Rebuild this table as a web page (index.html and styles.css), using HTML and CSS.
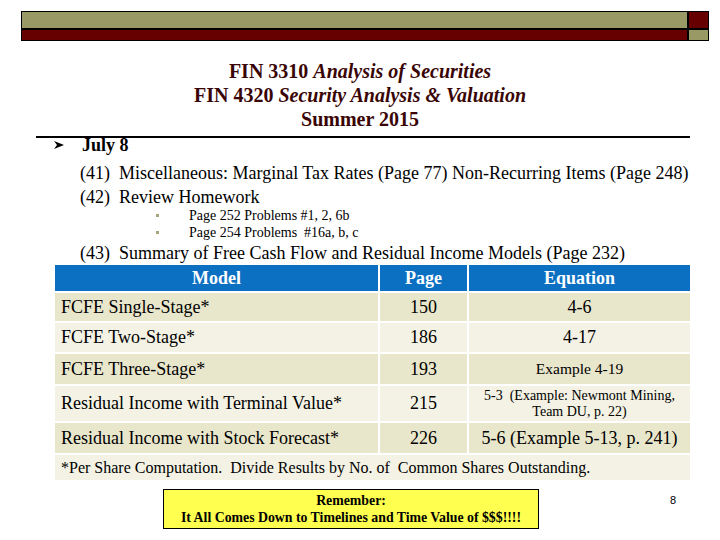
FILE: index.html
```html
<!DOCTYPE html>
<html>
<head>
<meta charset="utf-8">
<link rel="stylesheet" href="styles.css">
</head>
<body>
<div class="slide">
  <div class="topbar">
    <div class="olive"></div>
    <div class="red"></div>
    <div class="red"></div>
    <div class="olive"></div>
  </div>
  <div class="title">
    <div>FIN 3310 <i>Analysis of Securities</i></div>
    <div>FIN 4320 <i>Security Analysis &amp; Valuation</i></div>
    <div>Summer 2015</div>
  </div>
  <div class="rule"></div>
  <div class="lvl1">
    <svg class="arrow" width="10" height="10" viewBox="0 0 10 10"><polygon points="0,1 10,5 0,9 3,5" fill="#000"/></svg>
    <span>July 8</span>
  </div>
  <div class="item first"><span class="num">(41)</span>Miscellaneous: Marginal Tax Rates (Page 77) Non-Recurring Items (Page 248)</div>
  <div class="item"><span class="num">(42)</span>Review Homework</div>
  <ul class="sub"><li>Page 252 Problems #1, 2, 6b</li><li>Page 254 Problems  #16a, b, c</li></ul>
  <div class="item"><span class="num">(43)</span>Summary of Free Cash Flow and Residual Income Models (Page 232)</div>
  <div class="table">
    <div class="th">Model</div>
    <div class="th">Page</div>
    <div class="th">Equation</div>

    <div class="td model odd">FCFE Single-Stage*</div>
    <div class="td mid odd">150</div>
    <div class="td mid odd">4-6</div>

    <div class="td model even">FCFE Two-Stage*</div>
    <div class="td mid even">186</div>
    <div class="td mid even">4-17</div>

    <div class="td model odd">FCFE Three-Stage*</div>
    <div class="td mid odd">193</div>
    <div class="td mid odd small">Example 4-19</div>

    <div class="td model even">Residual Income with Terminal Value*</div>
    <div class="td mid even">215</div>
    <div class="td mid even tiny">5-3&nbsp; (Example: Newmont Mining,<br>Team DU, p. 22)</div>

    <div class="td model odd">Residual Income with Stock Forecast*</div>
    <div class="td mid odd">226</div>
    <div class="td mid odd">5-6 (Example 5-13, p. 241)</div>

    <div class="td foot even">*Per Share Computation.&nbsp; Divide Results by No. of&nbsp; Common Shares Outstanding.</div>
  </div>
  <div class="footer">
    <div class="remember">
      <div>Remember:</div>
      <div>It All Comes Down to Timelines and Time Value of $$$!!!!</div>
    </div>
    <div class="pagenum">8</div>
  </div>
</div>
</body>
</html>
```
FILE: styles.css
```css
html, body {
  margin: 0;
  padding: 0;
  background: #fff;
}
.slide {
  width: 720px;
  height: 540px;
  overflow: hidden;
  font-family: "Liberation Serif", "Times New Roman", serif;
  color: #000;
}
.topbar {
  margin: 11px 0 0 21px;
  width: 686px;
  display: grid;
  grid-template-columns: 1fr 19px;
  grid-template-rows: 16px 10px;
  gap: 2px;
  background: #000;
  border: 1px solid #000;
}
.olive { background: #999966; }
.red { background: #660000; }

.title {
  margin-top: 18px;
  text-align: center;
  font-weight: bold;
  font-size: 20px;
  line-height: 24px;
  color: #3a0505;
}
.rule {
  margin: 5px 0 0 36px;
  width: 654px;
  height: 2px;
  background: #000;
}
.lvl1 {
  display: flex;
  align-items: center;
  height: 14px;
  font-weight: bold;
  font-size: 18px;
  line-height: 14px;
}
.arrow {
  margin-left: 54px;
  margin-right: 18px;
}
.item {
  margin-left: 80px;
  font-size: 18px;
  line-height: 24px;
  white-space: nowrap;
}
.item.first { margin-top: 9px; }
.num {
  display: inline-block;
  width: 39px;
}
.sub {
  list-style: none;
  margin: -2px 0 0 0;
  padding: 0 0 0 156px;
  font-size: 14px;
  line-height: 17px;
}
.sub li {
  display: flex;
  align-items: center;
  white-space: pre;
}
.sub li::before {
  content: "";
  width: 3px;
  height: 3px;
  background: #a6a37a;
  margin-right: 30px;
}
.table {
  margin-left: 55px;
  width: 635px;
  display: grid;
  grid-template-columns: 323px 87px 221px;
  grid-template-rows: 26px 28px 29px 30px 35px 30px 25px;
  gap: 2px;
}
.th {
  background: #0b6fc2;
  color: #fff;
  font-weight: bold;
  font-size: 18px;
  display: flex;
  align-items: center;
  justify-content: center;
}
.td {
  display: flex;
  align-items: center;
  font-size: 18px;
}
.odd { background: #e8e6cb; }
.even { background: #f3f2e4; }
.model { padding-left: 6px; }
.mid { justify-content: center; text-align: center; }
.small { font-size: 15.5px; }
.tiny { font-size: 14px; line-height: 16px; }
.foot {
  grid-column: 1 / 4;
  padding-left: 6px;
  font-size: 16px;
}
.footer {
  display: flex;
  margin-top: 9px;
}
.remember {
  margin-left: 163px;
  width: 374px;
  border: 1px solid #000;
  background: #ffff4f;
  padding-top: 2px;
  text-align: center;
  font-weight: bold;
  font-size: 13.8px;
  line-height: 17px;
  height: 36px;
}
.pagenum {
  margin: 4px 0 0 131px;
  font-family: "Liberation Sans", Arial, sans-serif;
  font-size: 11px;
  line-height: 14px;
}
```
